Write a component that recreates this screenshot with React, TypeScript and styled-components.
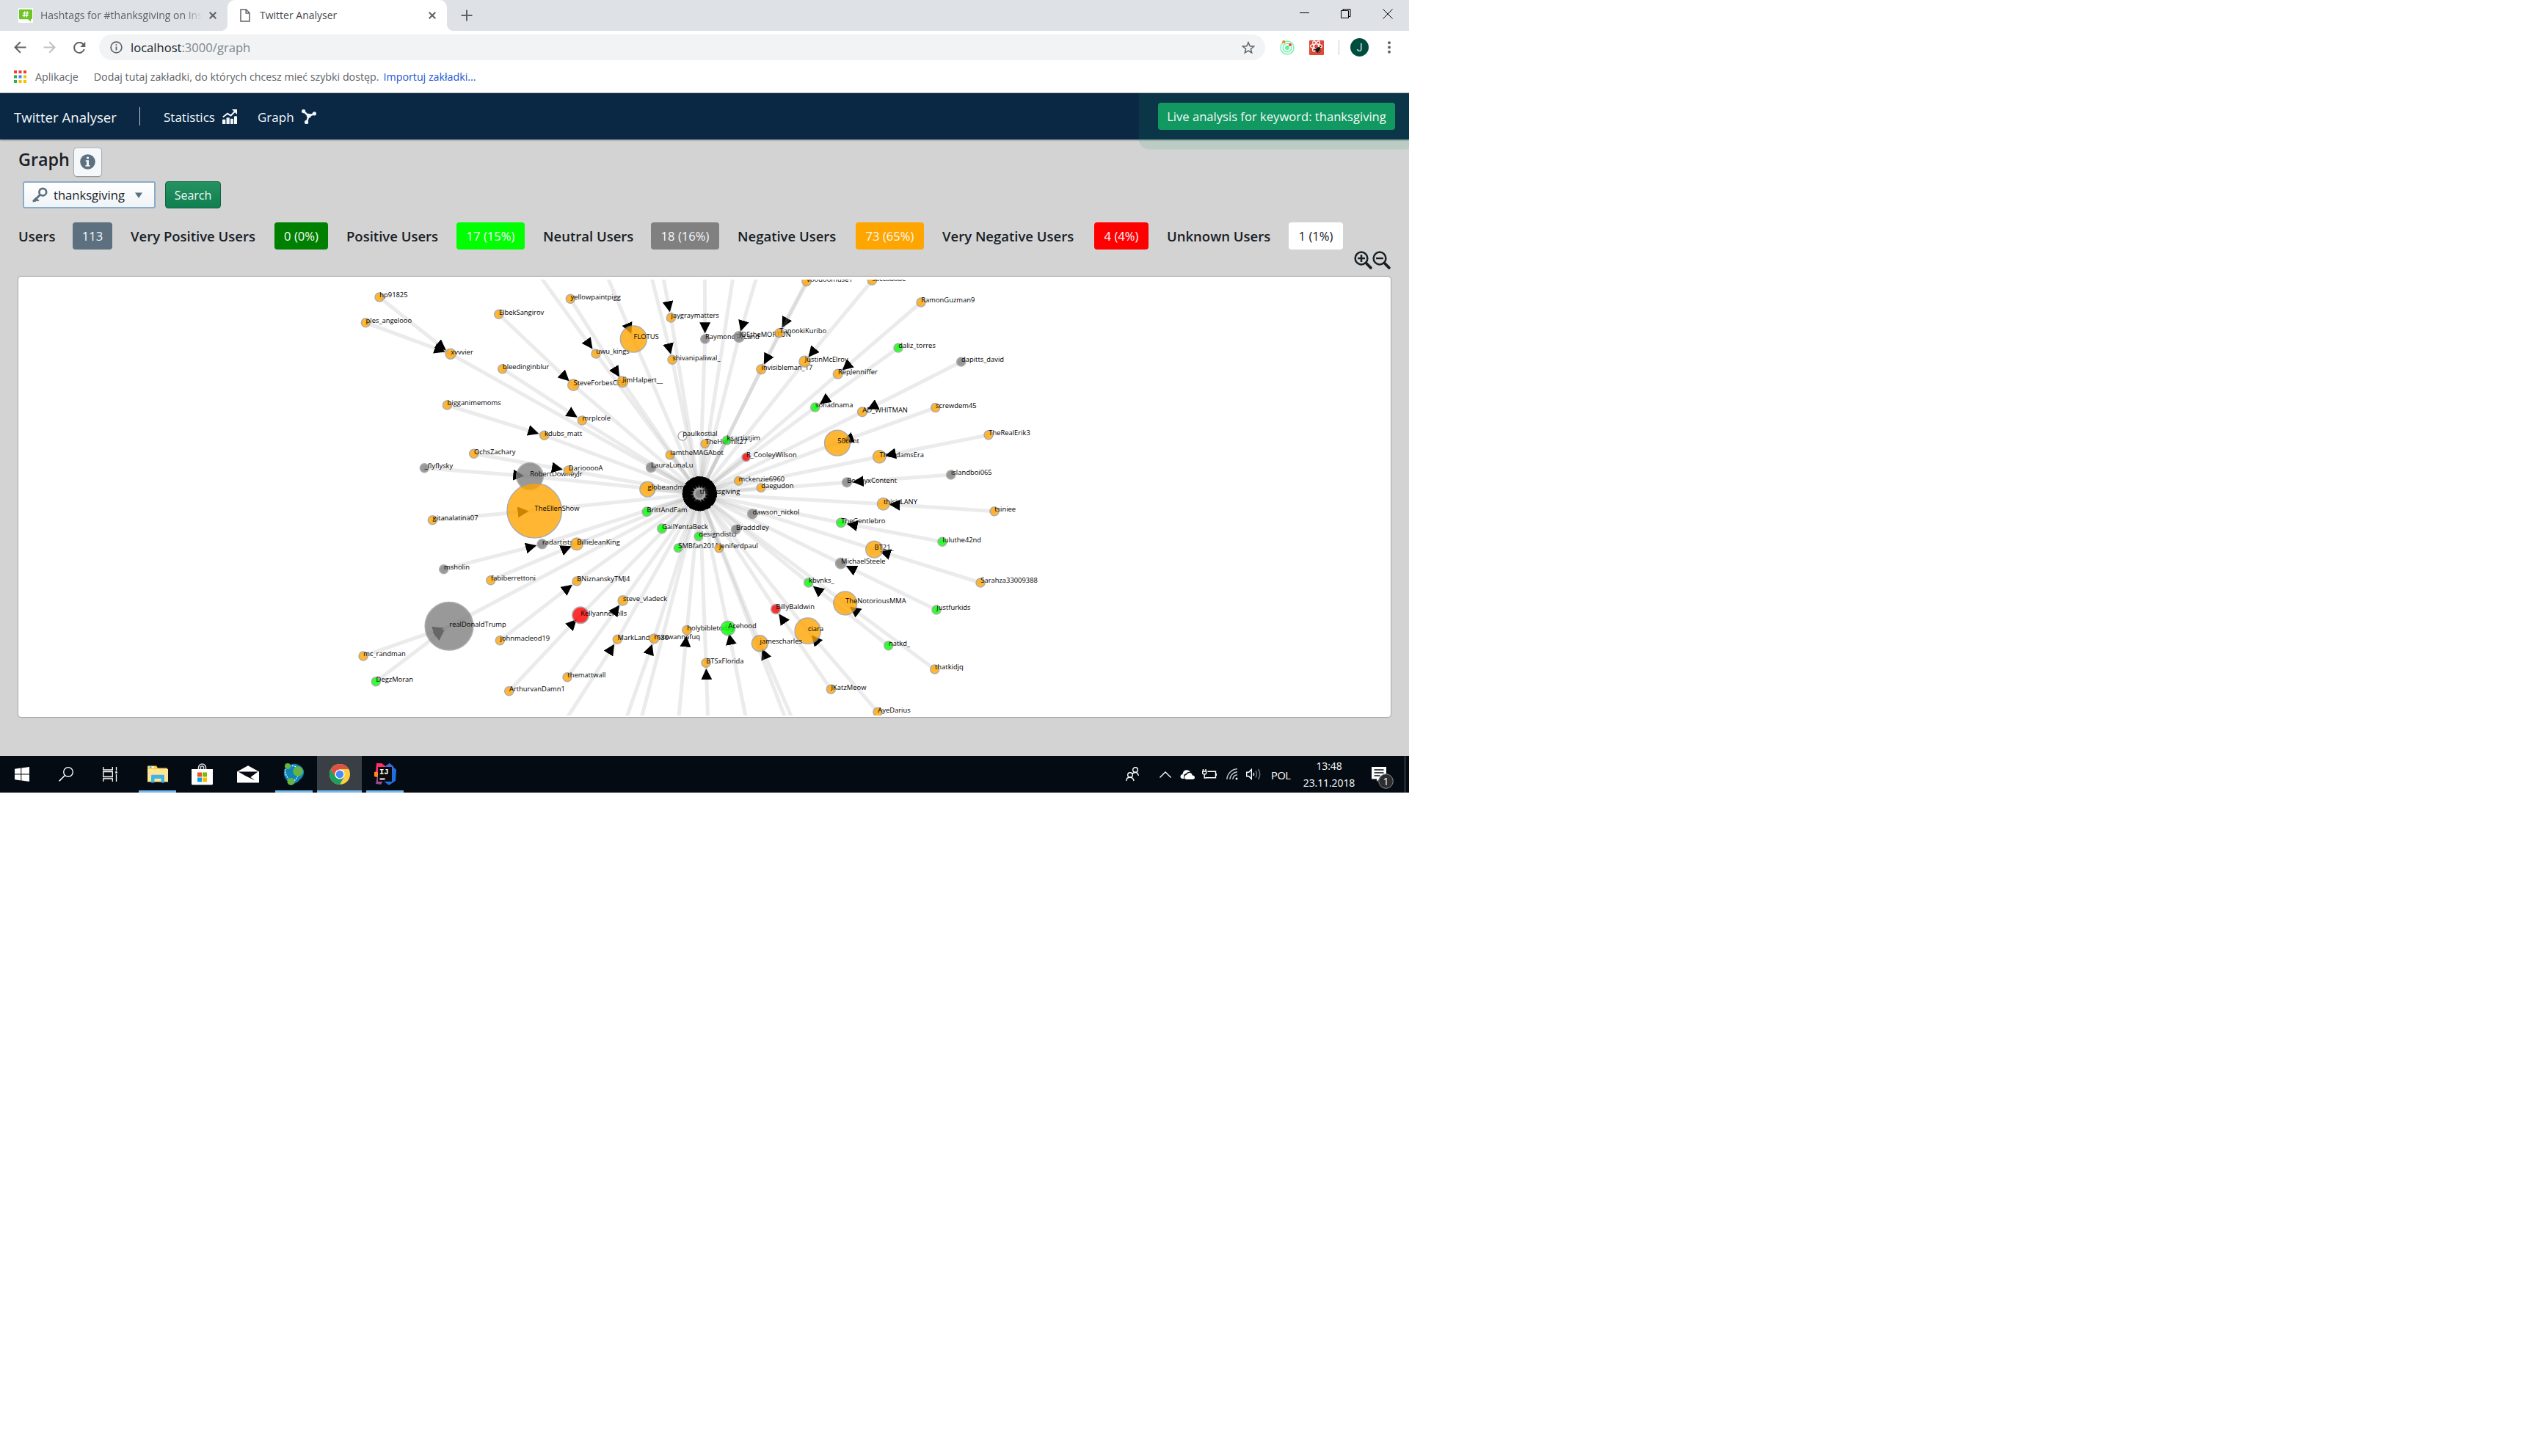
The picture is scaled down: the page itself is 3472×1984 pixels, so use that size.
import React from "react";
import styled, { createGlobalStyle } from "styled-components";

const Global = createGlobalStyle`
  html, body { margin: 0; padding: 0; background: #ffffff; }
  * { box-sizing: border-box; }
  svg { display: block; flex: none; }
`;

const Screen = styled.div`
  width: 1920px;
  height: 1080px;
  display: flex;
  flex-direction: column;
  overflow: hidden;
  background: #d3d3d3;
  font-family: "Open Sans", "Noto Sans", sans-serif;
  white-space: nowrap;
  color: #182026;
`;

/* ---------- browser chrome ---------- */

const TabStrip = styled.div`
  flex: none;
  height: 42px;
  background: #dee1e6;
  display: flex;
  align-items: stretch;
`;

const Tab = styled.div<{ $active?: boolean; $w: number; $pad: number }>`
  position: relative;
  width: ${(p) => p.$w}px;
  display: flex;
  align-items: center;
  padding-left: ${(p) => p.$pad}px;
  background: ${(p) => (p.$active ? "#ffffff" : "transparent")};
  border-radius: 10px 10px 0 0;
  ${(p) =>
    p.$active &&
    `&::before, &::after {
      content: ""; position: absolute; bottom: 0; width: 8px; height: 8px;
    }
    &::before { left: -8px; background: radial-gradient(circle at 0 0, transparent 7.5px, #fff 8px); }
    &::after { right: -8px; background: radial-gradient(circle at 100% 0, transparent 7.5px, #fff 8px); }`}
`;

const TabTitle = styled.span<{ $w: number; $fade?: boolean }>`
  width: ${(p) => p.$w}px;
  overflow: hidden;
  font-size: 14px;
  line-height: 24px;
  color: ${(p) => (p.$fade ? "#5f6368" : "#45494d")};
  ${(p) => p.$fade && "mask-image: linear-gradient(90deg, #000 89%, transparent);"}
`;

const Spacer = styled.div<{ $w?: number }>`
  ${(p) => (p.$w === undefined ? "flex: 1;" : `flex: none; width: ${p.$w}px;`)}
`;

const WindowButtons = styled.div`
  display: flex;
  align-items: flex-start;
  gap: 43px;
  padding: 12px 22px 0 0;
`;

const AddressBar = styled.div`
  flex: none;
  height: 45px;
  background: #ffffff;
  display: flex;
  align-items: center;
  padding-left: 19px;
`;

const Omnibox = styled.div`
  width: 1589px;
  height: 35px;
  border-radius: 18px;
  background: #f1f3f4;
  display: flex;
  align-items: center;
  padding: 0 14px 0 15px;
  font-size: 16.6px;
  color: #80868b;
  b { font-weight: 400; color: #202124; }
`;

const Divider = styled.div<{ $h: number; $color: string }>`
  width: 1px;
  height: ${(p) => p.$h}px;
  background: ${(p) => p.$color};
`;

const Avatar = styled.div`
  width: 25px;
  height: 25px;
  border-radius: 50%;
  background: #004d40;
  color: #d8e6e4;
  font: 14px Roboto, sans-serif;
  display: flex;
  align-items: center;
  justify-content: center;
`;

const BookmarkBar = styled.div`
  flex: none;
  height: 40px;
  background: #ffffff;
  border-bottom: 1px solid #b6b4b0;
  display: flex;
  align-items: center;
  padding: 0 0 4px 19px;
  font-size: 14.25px;
  color: #5f6368;
  a { color: #1a56cf; }
`;

/* ---------- page ---------- */

const Page = styled.div`
  height: 903px;
  flex: none;
  overflow: hidden;
  display: flex;
  flex-direction: column;
`;

const Navbar = styled.nav`
  flex: none;
  height: 63px;
  background: #0a2844;
  box-shadow: 0 1px 2px rgba(16, 22, 26, 0.45);
  display: flex;
  align-items: center;
  padding: 0 19px;
  color: #f5f8fa;
`;

const Brand = styled.span`
  width: 171px;
  font-size: 18.6px;
  padding-top: 2px;
`;

const NavLink = styled.span<{ $w: number }>`
  width: ${(p) => p.$w}px;
  font-size: 17px;
  padding-top: 1px;
`;

const LiveButton = styled.button`
  width: 323px;
  height: 37px;
  border: 0;
  border-radius: 4px;
  background: #129962;
  box-shadow: 0 0 0 26.5px rgba(15, 153, 96, 0.12);
  color: #f5f8fa;
  font: 16.6px "Open Sans", "Noto Sans", sans-serif;
  padding: 0;
`;

const Main = styled.main`
  flex: 1;
  display: flex;
  flex-direction: column;
  padding: 12px 25px 0;
`;

const TitleRow = styled.div`
  display: flex;
  height: 38px;
`;

const Title = styled.h4`
  margin: -3px 0 0;
  width: 76px;
  font-size: 23.3px;
  font-weight: 600;
  line-height: 36px;
`;

const InfoButton = styled.button`
  width: 37px;
  height: 38px;
  border: 0;
  border-radius: 4px;
  background: #f5f8fa;
  box-shadow: 0 0 0 1px rgba(16, 22, 26, 0.15), 0 1px 2px rgba(16, 22, 26, 0.25);
  padding: 0 0 1px;
  display: flex;
  align-items: center;
  justify-content: center;
`;

const SearchRow = styled.div`
  display: flex;
  gap: 13px;
  margin: 7px 0 0 6px;
  height: 37px;
`;

const Select = styled.div`
  width: 181px;
  border: 2px solid #8aaccb;
  border-radius: 3px;
  background: linear-gradient(#ffffff, #f0f4f7);
  display: flex;
  align-items: center;
  padding-left: 11px;
  font-size: 16.6px;
  span { width: 119px; padding-left: 8px; }
`;

const SearchButton = styled.button`
  width: 76px;
  border: 1px solid #126340;
  border-radius: 4px;
  background: linear-gradient(#259262, #0f7f50);
  color: #f5f8fa;
  font: 16px "Open Sans", "Noto Sans", sans-serif;
  padding: 0;
`;

const StatsRow = styled.div`
  display: flex;
  align-items: center;
  margin-top: 19px;
  height: 37px;
`;

const StatLabel = styled.h5<{ $w: number }>`
  margin: 0 25px 0 0;
  width: ${(p) => p.$w}px;
  font-size: 18.5px;
  font-weight: 600;
  line-height: 38px;
`;

const StatTag = styled.span<{ $w: number; $bg: string; $fg?: string }>`
  margin-right: 25px;
  width: ${(p) => p.$w}px;
  height: 37px;
  line-height: 38px;
  border-radius: 4px;
  text-align: center;
  font-size: 16.6px;
  background: ${(p) => p.$bg};
  color: ${(p) => p.$fg ?? "#f5f8fa"};
`;

const ZoomRow = styled.div`
  display: flex;
  justify-content: flex-end;
  margin-top: 2px;
  height: 25px;
`;

const GraphCard = styled.section`
  margin-top: 10px;
  height: 600px;
  padding: 4px 5px 2px;
  background: #ffffff;
  border-radius: 4px;
  box-shadow: 0 0 0 1px rgba(16, 22, 26, 0.15), 0 0 2px rgba(16, 22, 26, 0.3);
`;

const NodeLabel = styled.text`
  font-family: "Open Sans", "Noto Sans", sans-serif;
  font-size: 9.4px;
  fill: #000000;
`;

/* ---------- taskbar ---------- */

const Taskbar = styled.footer`
  flex: none;
  height: 50px;
  background: #040b13;
  display: flex;
  color: #ffffff;
`;

const TaskItem = styled.div<{ $w: number; $run?: boolean; $on?: boolean }>`
  width: ${(p) => p.$w}px;
  height: 50px;
  display: flex;
  align-items: center;
  justify-content: center;
  background: ${(p) => (p.$on ? "#3a3f45" : "transparent")};
  border-bottom: 3px solid ${(p) => (p.$run ? "#76b9ed" : "transparent")};
  padding-top: 3px;
`;

const Tray = styled.div`
  display: flex;
  align-items: center;
`;

const Lang = styled.span`
  width: 42px;
  font-size: 14.6px;
  letter-spacing: -0.4px;
  padding-top: 1px;
`;

const Clock = styled.div`
  width: 74px;
  font-size: 14px;
  letter-spacing: -0.1px;
  line-height: 23px;
  text-align: center;
  margin-right: 21px;
`;

/* ---------- icons ---------- */

const CloseX = ({ s = 10, c = "#5f6368", w = 2 }: { s?: number; c?: string; w?: number }) => (
  <svg width={s} height={s} viewBox="0 0 10 10">
    <path d="M.7.7 9.3 9.3M9.3.7.7 9.3" stroke={c} strokeWidth={w} fill="none" />
  </svg>
);

const HashFavicon = () => (
  <svg width="20" height="20" viewBox="0 0 20 20">
    <rect width="20" height="20" fill="#fff" />
    <path d="M1 3Q1 1.800 2.200 1.800h15.600Q19 1.800 19 3v11q0 1.200-1.200 1.200H17v3L13 15.200H2.200Q1 15.200 1 14z" fill="#6cc522" />
    <path d="M8.800 4.300 7.800 12.500M12.300 4.300 11.300 12.500M6 6.900h8M5.600 10h8" stroke="#fff" strokeWidth="1.300" />
  </svg>
);

const PageIcon = () => (
  <svg width="14" height="18" viewBox="0 0 14 18">
    <path d="M1 1h7.500L13 5.700V17H1zM8.200 1v5H13" fill="#fff" stroke="#5f6368" strokeWidth="1.500" />
  </svg>
);

const Arrow = ({ flip, c }: { flip?: boolean; c: string }) => (
  <svg width="17" height="17" viewBox="0 0 17 17" transform={flip ? "scale(-1 1)" : undefined}>
    <path d="M16.500 8.500H1.800M8.800 1.200 1.500 8.500l7.300 7.300" stroke={c} strokeWidth="2" fill="none" />
  </svg>
);

const Reload = () => (
  <svg width="18" height="18" viewBox="0 0 18 18">
    <path d="M15 5.200A7 7 0 1 0 15.800 11" stroke="#5f6368" strokeWidth="2" fill="none" />
    <path d="M17.300 1v7H10.300z" fill="#5f6368" />
  </svg>
);

const InfoCircle = () => (
  <svg width="17" height="17" viewBox="0 0 17 17">
    <circle cx="8.500" cy="8.500" r="7.400" fill="none" stroke="#5f6368" strokeWidth="1.700" />
    <path d="M8.500 7.600v5M8.500 4.300v1.800" stroke="#5f6368" strokeWidth="1.800" />
  </svg>
);

const Star = () => (
  <svg width="18" height="18" viewBox="0 0 18 18">
    <path d="m9 1.800 2.100 5 5.400.4-4.100 3.500 1.300 5.300L9 13.200 4.300 16l1.300-5.300L1.500 7.200l5.400-.4z" fill="none" stroke="#5f6368" strokeWidth="1.500" />
  </svg>
);

const OrbitExt = () => (
  <svg width="20" height="20" viewBox="0 0 20 20">
    <circle cx="10" cy="10" r="9" fill="none" stroke="#7df0b0" strokeWidth="1.500" />
    <circle cx="10" cy="10" r="5.800" fill="none" stroke="#7df0b0" strokeWidth="1.500" />
    <circle cx="10" cy="10" r="2.900" fill="#5cf0a0" />
    <circle cx="5.300" cy="2.200" r="2.100" fill="#f58220" />
    <circle cx="14" cy="6" r="2" fill="#f4511e" />
  </svg>
);

const ReactExt = () => (
  <svg width="20" height="20" viewBox="0 0 20 20">
    <rect width="20" height="20" rx="1" fill="#dc4a38" />
    <g fill="none" stroke="#fff" strokeWidth="1.100">
      <ellipse cx="9.500" cy="8" rx="8" ry="3" />
      <ellipse cx="9.500" cy="8" rx="8" ry="3" transform="rotate(60 9.500 8)" />
      <ellipse cx="9.500" cy="8" rx="8" ry="3" transform="rotate(120 9.500 8)" />
    </g>
    <ellipse cx="12" cy="12.500" rx="2.600" ry="3.600" transform="rotate(35 12 12.500)" fill="#151515" />
    <path d="M8 10l8 5M8 14l8-3M11 17l3-8M15 9l1-1M7 12l3 1M14 17l-2-3" stroke="#151515" strokeWidth="1" />
  </svg>
);

const Dots = () => (
  <svg width="4" height="17" viewBox="0 0 4 17" fill="#5f6368">
    <circle cx="2" cy="2.300" r="1.950" />
    <circle cx="2" cy="8.500" r="1.950" />
    <circle cx="2" cy="14.700" r="1.950" />
  </svg>
);

const APP_COLORS = ["#ea4335", "#ea4335", "#ea4335", "#34a853", "#4285f4", "#fbbc05", "#34a853", "#fbbc05", "#fbbc05"];
const AppsIcon = () => (
  <svg width="17" height="17" viewBox="0 0 17 17">
    {APP_COLORS.map((c, i) => (
      <rect key={i} x={(i % 3) * 6.5} y={Math.floor(i / 3) * 6.5} width="4" height="4" fill={c} />
    ))}
  </svg>
);

const TimelineIcon = () => (
  <svg width="20" height="20" viewBox="0 0 20 20" fill="#f5f8fa">
    <path d="M0 14.500q0-.8.9-.8h2.600q.8 0 .8.800V20H0zM5.500 12q0-.8.9-.8h2.600q.8 0 .8.800v8H5.500zM11 13.500q0-.8.9-.8h2.100q.8 0 .8.800V20H11zM15.900 10l.8-.8h2.500q.8 0 .8.800v10h-4.100z" />
    <path d="M.8 10.500 7 5.800l4.500 2.700L17 3" fill="none" stroke="#f5f8fa" strokeWidth="2" />
    <path d="M13 0h7v7z" />
  </svg>
);

const GraphIcon = () => (
  <svg width="20" height="20" viewBox="0 0 20 20" fill="#f5f8fa">
    <path d="M2.500 2.500 9.500 9 17.500 6M9.500 9 7 17.500" fill="none" stroke="#f5f8fa" strokeWidth="2.500" />
    <circle cx="2.600" cy="2.600" r="2.600" />
    <circle cx="17.400" cy="5.800" r="2.600" />
    <circle cx="9.800" cy="8.800" r="3" />
    <circle cx="6.600" cy="17.400" r="2.600" />
  </svg>
);

const InfoSign = () => (
  <svg width="21" height="21" viewBox="0 0 21 21">
    <circle cx="10.500" cy="10.500" r="10.300" fill="#5c7080" />
    <path d="M9 3.800h3v2.600H9zM7.700 8.300H12V15h1.500v1.700H7.500V15H9v-5H7.700z" fill="#f5f8fa" />
  </svg>
);

const KeyIcon = () => (
  <svg width="21" height="21" viewBox="0 0 21 21">
    <circle cx="14.300" cy="6.700" r="4.900" fill="none" stroke="#5c7080" strokeWidth="2.700" />
    <path d="M10.800 10.200 2 19" stroke="#5c7080" strokeWidth="3" />
    <path d="M.3 18.300 4.500 14l5 4-1.500 1.500-2-1-1.500 1.500-1.500-.5-2 1.200z" fill="#5c7080" />
  </svg>
);

const ZoomIcon = ({ plus }: { plus?: boolean }) => (
  <svg width="25" height="25" viewBox="0 0 25 25">
    <circle cx="10" cy="10" r="8.400" fill="none" stroke="#182026" strokeWidth="2.500" />
    <path d="m16.500 16.500 6.300 6.300" stroke="#182026" strokeWidth="3.800" strokeLinecap="round" />
    <path d={plus ? "M5 10h10M10 5v10" : "M5 10h10"} stroke="#182026" strokeWidth="2.500" />
  </svg>
);

const WinLogo = () => (
  <svg width="20" height="20" viewBox="0 0 20 20" fill="#fff">
    <path d="M0 2.700 8.300 1.600v7.900H0zM9.300 1.400 20 0v9.500H9.300zM0 10.500h8.300v7.900L0 17.300zM9.300 10.500H20V20L9.300 18.600z" />
  </svg>
);

const SearchGlyph = () => (
  <svg width="20" height="20" viewBox="0 0 20 20">
    <circle cx="13" cy="7" r="6.300" fill="none" stroke="#fff" strokeWidth="1.300" />
    <path d="M8.500 11.500.6 19.400" stroke="#fff" strokeWidth="1.500" />
  </svg>
);

const TaskView = () => (
  <svg width="20" height="20" viewBox="0 0 20 20" fill="none" stroke="#fff" strokeWidth="1.300">
    <path d="M.7 0v4h12.600V0M.7 20v-4h12.600v4M.7 6.500h12.600v7H.7zM18.500 0v5M18.500 10v10" />
    <rect x="17.200" y="6.200" width="2.600" height="2.600" fill="#fff" stroke="none" />
  </svg>
);

const Folder = () => (
  <svg width="28" height="24" viewBox="0 0 28 24">
    <path d="M0 1.500Q0 .5 1 .5h11l2 3h12.500q.5 0 .5.500v18H0z" fill="#f9cd47" />
    <path d="M0 5h28v17.500H0z" fill="#ffe694" />
    <path d="M1.500 1.500h7v2h-7z" fill="#fff" />
    <path d="M2.500 1.500h3v2h-3z" fill="#3dabe2" />
    <path d="M5 23.500V14q0-1.300 1.300-1.300h15.400Q23 12.700 23 14v9.500h-4.500V18h-9v5.500z" fill="#3fb4e9" />
  </svg>
);

const Store = () => (
  <svg width="29" height="30" viewBox="0 0 29 30">
    <path d="M9.500 8.500V6a5 5 0 0 1 10 0v2.500M12.500 8V5q1.500-2.500 4 0v3" fill="none" stroke="#ddd" strokeWidth="1.500" />
    <path d="M0 8h29v20q0 1.500-1.500 1.500h-26Q0 29.500 0 28z" fill="#fff" />
    <path d="M8 12.500h6v6H8z" fill="#f25022" />
    <path d="M15 12.500h6v6h-6z" fill="#7fba00" />
    <path d="M8 19.500h6v6H8z" fill="#00a4ef" />
    <path d="M15 19.500h6v6h-6z" fill="#ffb900" />
  </svg>
);

const Mail = () => (
  <svg width="30" height="24" viewBox="0 0 30 24">
    <path d="M0 8.500 15 .3l15 8.200v15H0z" fill="#fff" />
    <path d="M1.500 8.500h27L18.500 16l6 4.500L12 14.500z" fill="#040b13" />
  </svg>
);

const Neo4j = () => (
  <svg width="29" height="30" viewBox="0 0 29 30">
    <path d="M4 6Q10 0 18 1q8 3 10 9 1 8-6 13-4 5-10 5Q3 25 1 16 0 10 4 6z" fill="#0f86b8" />
    <path d="M5 5q10-4 16 3M2.500 8q-1 8 8 17M12 26q6-4 8-9" stroke="#fff" strokeWidth="1.300" strokeDasharray="2 1.500" fill="none" />
    <circle cx="6" cy="4" r="4" fill="#67b346" />
    <circle cx="20" cy="11" r="6.800" fill="#67b346" />
    <circle cx="10.500" cy="25" r="5" fill="#67b346" />
  </svg>
);

const Chrome = () => (
  <svg width="28" height="28" viewBox="0 0 28 28">
    <circle cx="14" cy="14" r="14" fill="#ffcd41" />
    <path d="M1.900 7A14 14 0 0 0 14 28l6-10.500L8 17.500z" fill="#19a15f" />
    <path d="M1.900 7a14 14 0 0 1 24.200 0H14l-6 10.500z" fill="#dd5144" />
    <circle cx="14" cy="14" r="6.600" fill="#fff" />
    <circle cx="14" cy="14" r="5.200" fill="#4c8bf5" />
  </svg>
);

const IntelliJ = () => (
  <svg width="30" height="30" viewBox="0 0 30 30">
    <path d="M16 3 21 0l9 9-1 15-9 6-8-6z" fill="#1a6fe8" />
    <path d="M20 0l6 4v8l-8-4z" fill="#4a68d8" />
    <path d="M3 0h7l8 6-4 8L0 16l2-6z" fill="#fc2f68" />
    <path d="M0 12l6 0v8l-6-2z" fill="#fb8a1d" />
    <path d="M4 18l8 6-3 5-7-1z" fill="#9a4a95" />
    <rect x="5" y="5" width="19" height="20" fill="#0a0a0a" />
    <text x="7" y="15" fontSize="10.500" fontWeight="700" fill="#fff" fontFamily="Liberation Mono, monospace">IJ</text>
    <path d="M7.500 20.500h7v2h-7z" fill="#fff" />
  </svg>
);

const line = { fill: "none", stroke: "#fff", strokeWidth: 1.4 };

const People = () => (
  <svg width="18" height="20" viewBox="0 0 18 20" {...line}>
    <circle cx="13" cy="4" r="3.300" />
    <circle cx="6" cy="11" r="3.300" />
    <path d="M.8 19q0-4.700 5.200-4.700 4 0 5 4.700M9 9.500q1.500-2 4-2 3.500 0 4.300 4.500" />
  </svg>
);
const Chevron = () => (
  <svg width="16" height="9" viewBox="0 0 16 9" {...line}>
    <path d="m.5 8.500 7.500-7.500 7.500 7.500" />
  </svg>
);
const Cloud = () => (
  <svg width="20" height="13" viewBox="0 0 20 13" fill="#fff">
    <path d="M2.500 12Q0 11 .5 8.500 1 6 3.500 6 4 1 8.500.3 12-.2 14 3 10 2 8.500 5 5 5.500 5 9q0 2 1 3z" />
    <path d="M8 13q-2-.5-2-3t3-3.300Q10 4 13 4t3.700 3.500Q20 8 20 10.300 20 13 17 13z" />
  </svg>
);
const Battery = () => (
  <svg width="20" height="14" viewBox="0 0 20 14" {...line}>
    <path d="M7.500 3.200h11v8.500H5M19.500 6v3M1.500 0v2.500M5 0v2.500M.7 3h5v2.500q0 1.500-2.500 1.500T.7 5.500zM3.200 7v5H6" />
  </svg>
);
const Wifi = () => (
  <svg width="16" height="16" viewBox="0 0 16 16" {...line}>
    <path d="M.8 15A15 15 0 0 1 15 .8M4.800 15A11 11 0 0 1 15 4.800M8.800 15A7 7 0 0 1 15 8.800" stroke="#c9cccf" />
    <circle cx="14" cy="14" r="1.500" fill="#fff" stroke="none" />
  </svg>
);
const Volume = () => (
  <svg width="20" height="16" viewBox="0 0 20 16" {...line}>
    <path d="M.7 5.200h3L7.300 1.500v13L3.700 10.800h-3zM10 6q1.200 2 0 4" />
    <path d="M13 3.500q3 4.500 0 9M16.500 1q4.500 7 0 14" stroke="#777" />
  </svg>
);
const Notifications = () => (
  <svg width="31" height="44" viewBox="0 -10 31 44">
    <path d="M0 2h20v16.500h-9.500L7 22v-3.500H0z" fill="#fff" />
    <path d="M3.500 6h13M3.500 10h13M3.500 14h8" stroke="#040b13" strokeWidth="1.300" />
    <circle cx="19.500" cy="21.500" r="9.800" fill="#2b2d30" stroke="#8d8f92" />
    <text x="19.500" y="26.500" textAnchor="middle" fontSize="14" fill="#fff" fontFamily="Open Sans, sans-serif">1</text>
  </svg>
);

/* ---------- graph data ---------- */

const COLORS = { n: "#ffa500", g: "#808080", p: "#00ff00", r: "#ff0000", w: "#ffffff" };

type NodeRow = [id: string, x: number, y: number, color: keyof typeof COLORS, r?: number];

const HUB = "thanksgiving";

const NODES: NodeRow[] = [
  [HUB, 953.3, 672.7, "g", 6],
  ["hp91825", 517, 405, "n"],
  ["ples_angelooo", 498.3, 439.7, "n"],
  ["xvvvier", 614, 482.3, "n", 7],
  ["ElbekSangirov", 679.7, 428.3, "n"],
  ["bleedinginblur", 684.7, 502.7, "n"],
  ["yellowpaintpigg", 777.3, 407.3, "n"],
  ["uwu_kings", 812, 481.9, "n"],
  ["SteveForbesCEO", 781.3, 524.7, "n", 7.6],
  ["mrplcole", 793.3, 573, "n"],
  ["bigganimemoms", 609.3, 552, "n"],
  ["kdubs_matt", 741.7, 593.3, "n"],
  ["OchsZachary", 645.7, 618.3, "n"],
  ["_flyflysky", 578.3, 637.7, "g"],
  ["RobertDowneyJr", 722, 649, "g", 18.2],
  ["DariooooA", 774.5, 641, "n"],
  ["TheEllenShow", 728.2, 695.8, "n", 37.2],
  ["FLOTUS", 863.3, 462, "n", 18],
  ["JimHalpert__", 848.3, 520.3, "n", 7.3],
  ["jaygraymatters", 914.3, 433, "n"],
  ["shivanipaliwal_", 916, 490.3, "n"],
  ["RaymondTVLand", 960.7, 462, "g"],
  ["JOEtheMORTON", 1007, 459, "g", 7.3],
  ["TanookiKuribo", 1062, 453.7, "n"],
  ["voodoomuse1", 1099, 383.7, "n"],
  ["invisibleman_17", 1037.3, 503.3, "n", 6.4],
  ["JustinMcElroy", 1096.5, 492.7, "n", 7.5],
  ["saccababe", 1188.3, 382.3, "n"],
  ["paulkostial", 930, 594, "w", 6],
  ["TheHermit27", 960.7, 604.7, "n", 5.7],
  ["ksartistjim", 990.3, 600, "p", 5.8],
  ["iamtheMAGAbot", 913, 620, "n", 5.8],
  ["LauraLunaLu", 887, 637, "g", 6.5],
  ["R_CooleyWilson", 1016.7, 623, "r", 5.7],
  ["mckenzie6960", 1006.3, 655.3, "n", 5.7],
  ["daegudon", 1037, 664.7, "n", 5.8],
  ["globeandmail", 882.3, 666.7, "n", 10.4],
  ["RamonGuzman9", 1255, 412, "n"],
  ["RepJenniffer", 1141.7, 509.7, "n", 6.4],
  ["daliz_torres", 1224, 474, "p"],
  ["sofiadnama", 1110.7, 555, "p"],
  ["dapitts_david", 1309.7, 493, "g"],
  ["AD_WHITMAN", 1175, 561.3, "n", 6.4],
  ["screwdem45", 1274.7, 555.5, "n"],
  ["50cent", 1141, 603.7, "n", 17.4],
  ["TheRealErik3", 1347, 592.7, "n"],
  ["TheAdamsEra", 1198.3, 622.3, "n", 8.7],
  ["islandboi065", 1295.7, 647, "g"],
  ["BoonyxContent", 1154, 657.3, "g", 6.4],
  ["tsiniee", 1355, 696.7, "n"],
  ["thisisLANY", 1203.7, 686.7, "n", 8.3],
  ["luluthe42nd", 1284, 738.3, "p"],
  ["TheGentlebro", 1146, 712.3, "p", 6.3],
  ["Sarahza33009388", 1336, 794, "n"],
  ["BT21_", 1191.3, 748.7, "n", 11.5],
  ["justfurkids", 1276, 831, "p"],
  ["MichaelSteele", 1145.7, 767.7, "g", 7.2],
  ["natkd_", 1210.7, 879.7, "p"],
  ["kbvnks_", 1101.7, 794, "p"],
  ["thatkidjq", 1273.7, 912, "n"],
  ["TheNotoriousMMA", 1151.7, 822, "n", 15.9],
  ["JKatzMeow", 1132.3, 939.3, "n"],
  ["BillyBaldwin", 1057, 830, "r", 6.5],
  ["AyeDarius", 1196, 970.3, "n"],
  ["ciara", 1100.7, 859.7, "n", 17.6],
  ["gitanalatina07", 589.3, 708.7, "n"],
  ["msholin", 604.7, 775.7, "g"],
  ["radartists", 738.7, 741.3, "g", 6.5],
  ["fabiberrettoni", 668.7, 790.7, "n"],
  ["BillieJeanKing", 786, 741.3, "n", 8.3],
  ["johnmacleod19", 681.3, 872.7, "n"],
  ["BNiznanskyTMJ4", 786, 792, "n"],
  ["ArthurvanDamn1", 693.7, 941.7, "n"],
  ["KellyannePolls", 791, 838.3, "r", 11.2],
  ["mc_randman", 495, 894, "n"],
  ["DegzMoran", 512.3, 928.7, "p"],
  ["realDonaldTrump", 612, 853.3, "g", 32.8],
  ["themattwall", 773, 922.7, "n"],
  ["steve_vladeck", 848.7, 818.3, "n", 6.6],
  ["MarkLand_1630", 841.3, 871.3, "n"],
  ["mxxwannafuq", 891.3, 870.3, "n", 6.4],
  ["holybibletoday", 936, 858.7, "n", 6.2],
  ["BTSxFlorida", 962, 903.3, "n"],
  ["Acehood", 992, 856, "p", 9.8],
  ["jamescharles", 1035.3, 876.7, "n", 10.9],
  ["BrittAndFam", 881.3, 697.3, "p", 6.2],
  ["GailYentaBeck", 902, 720.3, "p", 6.2],
  ["designdistcl", 952, 731, "p", 5.7],
  ["SMBfan2011", 924, 746.7, "p", 5.7],
  ["jeniferdpaul", 979.7, 747, "n", 5.7],
  ["Bradddley", 1002.7, 721.7, "g", 6.2],
  ["dawson_nickol", 1025.3, 700.3, "g", 6.6],
];

/* second-level mentions: author -> mentioned account */
const REPLIES: Record<string, string> = {
  hp91825: "xvvvier",
  ples_angelooo: "xvvvier",
  ElbekSangirov: "SteveForbesCEO",
  bleedinginblur: "mrplcole",
  yellowpaintpigg: "JimHalpert__",
  bigganimemoms: "kdubs_matt",
  OchsZachary: "DariooooA",
  _flyflysky: "RobertDowneyJr",
  voodoomuse1: "TanookiKuribo",
  saccababe: "JustinMcElroy",
  RamonGuzman9: "RepJenniffer",
  daliz_torres: "sofiadnama",
  dapitts_david: "AD_WHITMAN",
  screwdem45: "50cent",
  TheRealErik3: "TheAdamsEra",
  islandboi065: "BoonyxContent",
  tsiniee: "thisisLANY",
  luluthe42nd: "TheGentlebro",
  Sarahza33009388: "BT21_",
  justfurkids: "MichaelSteele",
  natkd_: "kbvnks_",
  thatkidjq: "TheNotoriousMMA",
  JKatzMeow: "BillyBaldwin",
  AyeDarius: "ciara",
  gitanalatina07: "TheEllenShow",
  msholin: "radartists",
  fabiberrettoni: "BillieJeanKing",
  johnmacleod19: "BNiznanskyTMJ4",
  ArthurvanDamn1: "KellyannePolls",
  mc_randman: "realDonaldTrump",
  DegzMoran: "realDonaldTrump",
  themattwall: "steve_vladeck",
};

/* authors scrolled out of the viewport */
const OFFSCREEN: [x: number, y: number, target: string][] = [
  [724.8, 361, "uwu_kings"],
  [820.9, 361, "FLOTUS"],
  [900.5, 361, "jaygraymatters"],
  [883.7, 361, "shivanipaliwal_"],
  [960.3, 361, "RaymondTVLand"],
  [1035.8, 361, "JOEtheMORTON"],
  [1112.1, 361, "invisibleman_17"],
  [1001.4, 361, HUB],
  [758.7, 1000, "MarkLand_1630"],
  [846, 1000, "mxxwannafuq"],
  [868.5, 1000, HUB],
  [922.8, 1000, "holybibletoday"],
  [965.4, 1000, "BTSxFlorida"],
  [1020.8, 1000, "Acehood"],
  [1088.5, 1000, "jamescharles"],
  [1078.3, 1000, HUB],
];

const byId = new Map(NODES.map((n) => [n[0], n]));

const Edge = ({ x1, y1, target }: { x1: number; y1: number; target: string }) => {
  const [, x2, y2] = byId.get(target)!;
  return (
    <line x1={x1} y1={y1} x2={x2} y2={y2} stroke="#999999" strokeOpacity="0.2" strokeWidth="5" markerEnd="url(#arrow)" />
  );
};

const MentionGraph = () => (
  <svg width="1860" height="594" viewBox="30 381 1860 594">
    <defs>
      <marker id="arrow" markerUnits="userSpaceOnUse" markerWidth="15" markerHeight="15" refX="22.8" refY="7.500" orient="auto">
        <path d="M0 0 15 7.500 0 15z" fill="#000" />
      </marker>
    </defs>
    {NODES.filter(([id]) => id !== HUB).map(([id, x, y]) => (
      <Edge key={id} x1={x} y1={y} target={REPLIES[id] ?? HUB} />
    ))}
    {OFFSCREEN.map(([x, y, target]) => (
      <Edge key={`${x}-${y}`} x1={x} y1={y} target={target} />
    ))}
    {NODES.map(([id, x, y, color, r = 6]) => (
      <g key={id}>
        <circle cx={x} cy={y} r={r} fill={COLORS[color]} stroke="#999999" strokeWidth="1.500" opacity="0.8" />
        <NodeLabel x={x + 0.3} y={Math.round(y + 0.2)}>{id}</NodeLabel>
      </g>
    ))}
  </svg>
);

const STATS = [
  { label: "Users", lw: 49, value: "113", w: 54, bg: "#5c7080" },
  { label: "Very Positive Users", lw: 171, value: "0 (0%)", w: 73, bg: "#008000" },
  { label: "Positive Users", lw: 125, value: "17 (15%)", w: 93, bg: "#00ff00" },
  { label: "Neutral Users", lw: 122, value: "18 (16%)", w: 93, bg: "#808080" },
  { label: "Negative Users", lw: 136, value: "73 (65%)", w: 93, bg: "#ffa500" },
  { label: "Very Negative Users", lw: 182, value: "4 (4%)", w: 74, bg: "#ff0000" },
  { label: "Unknown Users", lw: 141, value: "1 (1%)", w: 74, bg: "#ffffff", fg: "#182026" },
];

export default function App() {
  return (
    <>
      <Global />
      <Screen>
        <TabStrip>
          <Tab $w={310} $pad={25}>
            <HashFavicon />
            <Spacer $w={10} />
            <TabTitle $w={220} $fade>Hashtags for #thanksgiving on Instagram</TabTitle>
            <Spacer $w={10} />
            <CloseX />
          </Tab>
          <Tab $w={299} $pad={17} $active>
            <PageIcon />
            <Spacer $w={13} />
            <TabTitle $w={230}>Twitter Analyser</TabTitle>
            <CloseX />
          </Tab>
          <Spacer $w={19} />
          <svg width="16" height="42" viewBox="0 0 16 42">
            <path d="M8 13.500v15M.5 21h15" stroke="#5f6368" strokeWidth="2" />
          </svg>
          <Spacer />
          <WindowButtons>
            <svg width="13" height="13" viewBox="0 0 13 13"><path d="M0 5.500h13" stroke="#000" /></svg>
            <svg width="14" height="13" viewBox="0 0 14 13" fill="none" stroke="#000">
              <path d="M.5 2.500h10v10H.5zM3 2.500V.5h10v10h-2.500" />
            </svg>
            <svg width="14" height="14" viewBox="0 0 14 14"><path d="m.5.5 13 13M13.500.5l-13 13" stroke="#000" /></svg>
          </WindowButtons>
        </TabStrip>
        <AddressBar>
          <Arrow c="#5f6368" />
          <Spacer $w={23} />
          <Arrow c="#bdc1c6" flip />
          <Spacer $w={23} />
          <Reload />
          <Spacer $w={18} />
          <Omnibox>
            <InfoCircle />
            <Spacer $w={11} />
            <span><b>localhost</b>:3000/graph</span>
            <Spacer />
            <Star />
          </Omnibox>
          <Spacer $w={20} />
          <OrbitExt />
          <Spacer $w={20} />
          <ReactExt />
          <Spacer $w={20} />
          <Divider $h={20} $color="#c6c8cb" />
          <Spacer $w={15} />
          <Avatar>J</Avatar>
          <Spacer $w={26} />
          <Dots />
        </AddressBar>
        <BookmarkBar>
          <AppsIcon />
          <Spacer $w={12} />
          <span>Aplikacje</span>
          <Spacer $w={21} />
          <span>Dodaj tutaj zakładki, do których chcesz mieć szybki dostęp.</span>
          <Spacer $w={6} />
          <a>Importuj zakładki...</a>
        </BookmarkBar>

        <Page>
          <Navbar>
            <Brand>Twitter Analyser</Brand>
            <Divider $h={25} $color="#c5ccd3" />
            <Spacer $w={32} />
            <NavLink $w={80}>Statistics</NavLink>
            <TimelineIcon />
            <Spacer $w={28} />
            <NavLink $w={60}>Graph</NavLink>
            <GraphIcon />
            <Spacer />
            <LiveButton>Live analysis for keyword: thanksgiving</LiveButton>
          </Navbar>
          <Main>
            <TitleRow>
              <Title>Graph</Title>
              <InfoButton><InfoSign /></InfoButton>
            </TitleRow>
            <SearchRow>
              <Select>
                <KeyIcon />
                <span>thanksgiving</span>
                <svg width="10" height="8" viewBox="0 0 10 8"><path d="M0 .5h10L5 8z" fill="#5c7080" /></svg>
              </Select>
              <SearchButton>Search</SearchButton>
            </SearchRow>
            <StatsRow>
              {STATS.map((s) => (
                <React.Fragment key={s.label}>
                  <StatLabel $w={s.lw}>{s.label}</StatLabel>
                  <StatTag $w={s.w} $bg={s.bg} $fg={s.fg}>{s.value}</StatTag>
                </React.Fragment>
              ))}
            </StatsRow>
            <ZoomRow>
              <ZoomIcon plus />
              <ZoomIcon />
            </ZoomRow>
            <GraphCard>
              <MentionGraph />
            </GraphCard>
          </Main>
        </Page>

        <Taskbar>
          <TaskItem $w={60}><WinLogo /></TaskItem>
          <TaskItem $w={60}><SearchGlyph /></TaskItem>
          <TaskItem $w={60}><TaskView /></TaskItem>
          <Spacer $w={9} />
          <TaskItem $w={51} $run><Folder /></TaskItem>
          <Spacer $w={5} />
          <TaskItem $w={61}><Store /></TaskItem>
          <TaskItem $w={64}><Mail /></TaskItem>
          <Spacer $w={5} />
          <TaskItem $w={51} $run><Neo4j /></TaskItem>
          <Spacer $w={6} />
          <TaskItem $w={61} $run $on><Chrome /></TaskItem>
          <Spacer $w={6} />
          <TaskItem $w={51} $run><IntelliJ /></TaskItem>
          <Spacer />
          <Tray>
            <People />
            <Spacer $w={28} />
            <Chevron />
            <Spacer $w={12} />
            <Cloud />
            <Spacer $w={10} />
            <Battery />
            <Spacer $w={13} />
            <Wifi />
            <Spacer $w={11} />
            <Volume />
            <Spacer $w={14} />
            <Lang>POL</Lang>
            <Clock>13:48<br />23.11.2018</Clock>
            <Notifications />
            <Spacer $w={14} />
            <Divider $h={50} $color="#5b6067" />
            <Spacer $w={5} />
          </Tray>
        </Taskbar>
      </Screen>
    </>
  );
}
